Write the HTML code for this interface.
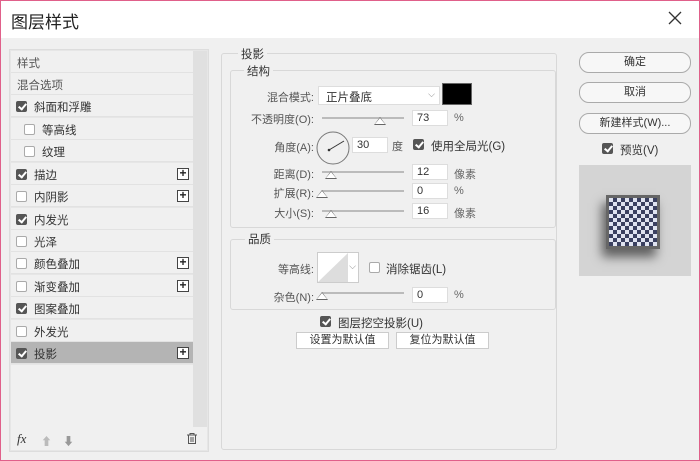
<!DOCTYPE html><html><head><meta charset="utf-8"><style>
*{box-sizing:border-box;margin:0;padding:0}
body{width:700px;height:461px;overflow:hidden;background:#f0f0f0;font-family:"Liberation Sans","Noto Sans CJK SC",sans-serif;font-size:11px;color:#333;position:relative}
.a{position:absolute}
.frame{left:0;top:0;width:700px;height:461px;border:1px solid #e0608a;pointer-events:none;z-index:9}
.title{left:0;top:0;width:700px;height:38px;background:#fff}
.cb{position:absolute;width:11px;height:11px;border:1px solid #aaa;background:#fff;border-radius:2px}
.cb.on{background:#555;border-color:#555}
.cb.on:after{content:"";position:absolute;left:3px;top:0px;width:3px;height:6px;border:solid #fff;border-width:0 2px 2px 0;transform:rotate(40deg)}
.row{position:absolute;left:11px;width:182px;height:22px;border-bottom:1px solid #e2e2e2;background:#f0f0f0}
.row span{position:absolute;top:4px;font-size:11.5px}
.plus{position:absolute;left:166px;top:5px;width:12px;height:12px;border:1px solid #444;background:#fff;font-size:12px;line-height:9px;text-align:center;font-weight:bold;color:#222}
.inp{position:absolute;height:16px;background:#fff;border:1px solid #ddd;font-size:11px;padding:1px 4px}
.slider{position:absolute;height:2px;background:#bbb;width:82px}
.thumb{position:absolute;width:0;height:0;border-left:6px solid transparent;border-right:6px solid transparent;border-bottom:8px solid #666}
.thumb:after{content:"";position:absolute;left:-5px;top:1px;border-left:5px solid transparent;border-right:5px solid transparent;border-bottom:6px solid #fff}
.lbl{position:absolute;font-size:11px;color:#555;text-align:right}
.btn{position:absolute;left:579px;width:112px;height:21px;border:1px solid #aaa;border-radius:10px;background:#f7f7f7;text-align:center;line-height:19px;font-size:11px}
.sbtn{position:absolute;height:17px;border:1px solid #ccc;background:#fff;text-align:center;line-height:15px;font-size:11px}
</style></head><body>
<div class="a title"></div>
<div class="a" style="left:11px;top:8px;font-size:17px;color:#222">图层样式</div>
<svg class="a" style="left:668px;top:11px" width="14" height="14"><path d="M1 1L13 13M13 1L1 13" stroke="#333" stroke-width="1.3"/></svg>

<div class="a" style="left:9px;top:49px;width:200px;height:403px;border:1px solid #ddd;background:#e6e6e6"></div>
<div class="a" style="left:193px;top:51px;width:14px;height:376px;background:#e0e0e0"></div>
<div class="row" style="top:51px"><span style="left:6px;color:#555">样式</span></div>
<div class="row" style="top:73px"><span style="left:6px;color:#555">混合选项</span></div>
<div class="row" style="top:95px"><i class="cb on" style="left:5px;top:6px"></i><span style="left:23px">斜面和浮雕</span></div>
<div class="row" style="top:118px"><i class="cb" style="left:13px;top:6px"></i><span style="left:31px">等高线</span></div>
<div class="row" style="top:140px"><i class="cb" style="left:13px;top:6px"></i><span style="left:31px">纹理</span></div>
<div class="row" style="top:163px"><i class="cb on" style="left:5px;top:6px"></i><span style="left:23px">描边</span><b class="plus">+</b></div>
<div class="row" style="top:185px"><i class="cb" style="left:5px;top:6px"></i><span style="left:23px">内阴影</span><b class="plus">+</b></div>
<div class="row" style="top:208px"><i class="cb on" style="left:5px;top:6px"></i><span style="left:23px">内发光</span></div>
<div class="row" style="top:230px"><i class="cb" style="left:5px;top:6px"></i><span style="left:23px">光泽</span></div>
<div class="row" style="top:252px"><i class="cb" style="left:5px;top:6px"></i><span style="left:23px">颜色叠加</span><b class="plus">+</b></div>
<div class="row" style="top:275px"><i class="cb" style="left:5px;top:6px"></i><span style="left:23px">渐变叠加</span><b class="plus">+</b></div>
<div class="row" style="top:297px"><i class="cb on" style="left:5px;top:6px"></i><span style="left:23px">图案叠加</span></div>
<div class="row" style="top:320px"><i class="cb" style="left:5px;top:6px"></i><span style="left:23px">外发光</span></div>
<div class="row" style="top:342px;background:#b4b4b4"><i class="cb on" style="left:5px;top:6px"></i><span style="left:23px">投影</span><b class="plus">+</b></div>
<div class="a" style="left:11px;top:365px;width:182px;height:62px;background:#f0f0f0"></div>
<div class="a" style="left:11px;top:427px;width:196px;height:23px;background:#f0f0f0"></div>
<div class="a" style="left:17px;top:431px;font-style:italic;font-family:'Liberation Serif',serif;font-size:13px;color:#333">fx</div>
<div class="a" style="left:41px;top:433px;color:#bbb;font-size:11px">⬆</div>
<div class="a" style="left:63px;top:433px;color:#999;font-size:11px">⬇</div>
<svg class="a" style="left:187px;top:433px" width="10" height="11"><path d="M0 2H10M3 2V0.5H7V2M1.5 2.5V10.5H8.5V2.5M4 4V9M6 4V9" stroke="#555" fill="none"/></svg>

<div class="a" style="left:221px;top:53px;width:336px;height:397px;border:1px solid #d8d8d8;border-radius:3px"></div>
<div class="a" style="left:238px;top:46px;background:#f0f0f0;padding:0 3px;font-size:11.5px">投影</div>
<div class="a" style="left:230px;top:70px;width:326px;height:158px;border:1px solid #d8d8d8;border-radius:3px"></div>
<div class="a" style="left:244px;top:63px;background:#f0f0f0;padding:0 3px;font-size:11.5px">结构</div>
<div class="lbl" style="left:240px;top:89px;width:74px">混合模式:</div>
<div class="a" style="left:318px;top:86px;width:122px;height:19px;background:#fff;border:1px solid #ddd;padding:2px 7px;font-size:11.5px">正片叠底<span style="position:absolute;right:4px;top:2px;color:#888;font-size:9px">⌵</span></div>
<div class="a" style="left:442px;top:83px;width:30px;height:22px;background:#000;border:1px solid #666"></div>
<div class="lbl" style="left:230px;top:111px;width:84px">不透明度(O):</div>
<div class="slider" style="left:322px;top:117px"></div><div class="thumb" style="left:374px;top:117px"></div>
<div class="inp" style="left:412px;top:110px;width:36px">73</div><div class="a" style="left:454px;top:112px;color:#666">%</div>
<div class="lbl" style="left:240px;top:139px;width:74px">角度(A):</div>
<svg class="a" style="left:316px;top:131px" width="34" height="34"><circle cx="17" cy="17" r="16" fill="none" stroke="#777"/><circle cx="13" cy="19" r="1.3" fill="#333"/><path d="M13 19L28 10" stroke="#333"/></svg>
<div class="inp" style="left:352px;top:137px;width:36px">30</div><div class="a" style="left:392px;top:138px;color:#555">度</div>
<i class="cb on" style="left:413px;top:139px"></i><div class="a" style="left:431px;top:138px;font-size:11.5px">使用全局光(G)</div>
<div class="lbl" style="left:240px;top:166px;width:74px">距离(D):</div>
<div class="slider" style="left:322px;top:171px"></div><div class="thumb" style="left:325px;top:171px"></div>
<div class="inp" style="left:412px;top:164px;width:36px">12</div><div class="a" style="left:454px;top:166px;color:#666">像素</div>
<div class="lbl" style="left:240px;top:185px;width:74px">扩展(R):</div>
<div class="slider" style="left:322px;top:190px"></div><div class="thumb" style="left:316px;top:190px"></div>
<div class="inp" style="left:412px;top:183px;width:36px">0</div><div class="a" style="left:454px;top:185px;color:#666">%</div>
<div class="lbl" style="left:240px;top:205px;width:74px">大小(S):</div>
<div class="slider" style="left:322px;top:210px"></div><div class="thumb" style="left:325px;top:210px"></div>
<div class="inp" style="left:412px;top:203px;width:36px">16</div><div class="a" style="left:454px;top:205px;color:#666">像素</div>

<div class="a" style="left:230px;top:239px;width:326px;height:71px;border:1px solid #d8d8d8;border-radius:3px"></div>
<div class="a" style="left:245px;top:231px;background:#f0f0f0;padding:0 3px;font-size:11.5px">品质</div>
<div class="lbl" style="left:240px;top:261px;width:74px">等高线:</div>
<div class="a" style="left:317px;top:252px;width:42px;height:31px;border:1px solid #ccc;background:#fff"><svg width="30" height="29"><path d="M0 29L30 0V29Z" fill="#ddd"/></svg><span style="position:absolute;right:2px;top:8px;color:#888;font-size:9px">⌵</span></div>
<i class="cb" style="left:369px;top:262px"></i><div class="a" style="left:386px;top:261px;font-size:11.5px">消除锯齿(L)</div>
<div class="lbl" style="left:240px;top:289px;width:74px">杂色(N):</div>
<div class="slider" style="left:322px;top:292px"></div><div class="thumb" style="left:316px;top:292px"></div>
<div class="inp" style="left:412px;top:287px;width:36px">0</div><div class="a" style="left:454px;top:289px;color:#666">%</div>
<i class="cb on" style="left:320px;top:316px"></i><div class="a" style="left:338px;top:315px;font-size:11.5px">图层挖空投影(U)</div>
<div class="sbtn" style="left:296px;top:332px;width:93px">设置为默认值</div>
<div class="sbtn" style="left:396px;top:332px;width:93px">复位为默认值</div>

<div class="btn" style="top:52px">确定</div>
<div class="btn" style="top:82px">取消</div>
<div class="btn" style="top:113px">新建样式(W)...</div>
<i class="cb on" style="left:602px;top:143px"></i><div class="a" style="left:620px;top:142px;font-size:11.5px">预览(V)</div>
<div class="a" style="left:579px;top:165px;width:112px;height:111px;background:#d4d4d4"></div>
<div class="a" style="left:606px;top:195px;width:54px;height:54px;box-shadow:-4px 8px 10px rgba(0,0,0,.55);background:repeating-conic-gradient(#3a4060 0 25%,#dfe3f0 0 50%) 0 0/8px 8px;border:3px solid #666"></div>
<div class="frame a"></div>
</body></html>
